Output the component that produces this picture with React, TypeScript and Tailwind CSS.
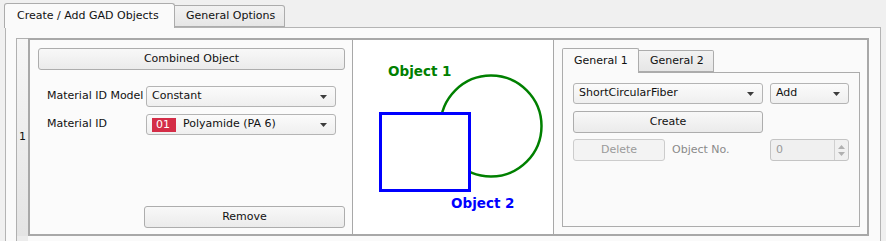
import React from "react";

const Arrow = ({ color = "#3c3c3c" }: { color?: string }) => (
  <svg width="7" height="4" viewBox="0 0 7 4" className="shrink-0">
    <path d="M0 0h7L3.5 4z" fill={color} />
  </svg>
);

const button =
  "h-[22px] border border-[#adadad] rounded-[3px] bg-linear-to-b from-[#f8f8f8] to-[#ebebeb] flex items-center justify-center text-[#111]";

const combo =
  "h-[21px] border border-[#b4b4b4] rounded-[3px] bg-linear-to-b from-[#fbfbfb] to-[#efefef] flex items-center justify-between pl-[5px] pr-[8px] text-[#111]";

const LeftPanel = () => (
  <div className="w-[323px] border-r border-[#a8a8a8] bg-[#fbfbfb] flex flex-col pl-[8px] pr-[7px] pt-[8px] pb-[6px]">
    <div className={`${button} w-full`}>Combined Object</div>
    <div className="mt-[16px] flex flex-col gap-[7px] pl-[9px]">
      <div className="flex items-center">
        <span className="w-[99px]">Material ID Model</span>
        <div className={`${combo} w-[190px]`}>
          <span>Constant</span>
          <Arrow />
        </div>
      </div>
      <div className="flex items-center">
        <span className="w-[99px]">Material ID</span>
        <div className={`${combo} w-[190px]`}>
          <span className="flex items-center">
            <span className="bg-[#d42d47] text-white h-[14px] w-[24px] pl-[4px] flex items-center leading-none">01</span>
            <span className="ml-[7px]">Polyamide (PA 6)</span>
          </span>
          <Arrow />
        </div>
      </div>
    </div>
    <div className={`${button} w-[201px] self-end mt-auto`}>Remove</div>
  </div>
);

const Drawing = () => (
  <div className="w-[201px] border-r border-[#a8a8a8] bg-white">
    <svg width="200" height="194" viewBox="0 0 200 194">
      <circle cx="138" cy="86" r="50.5" fill="none" stroke="#008000" strokeWidth="2.5" />
      <rect x="27.5" y="73.5" width="89" height="77" fill="white" stroke="#0000ff" strokeWidth="3" />
      <text x="35" y="36" fill="#008000" fontFamily="'DejaVu Sans', sans-serif" fontWeight="bold" fontSize="13.5">
        Object 1
      </text>
      <text x="98" y="168" fill="#0000ff" fontFamily="'DejaVu Sans', sans-serif" fontWeight="bold" fontSize="13.5">
        Object 2
      </text>
    </svg>
  </div>
);

const RightPanel = () => (
  <div className="flex-1 flex flex-col pl-[8px] pr-[7px] pt-[8px] pb-[7px]">
    <div className="flex items-end h-[24px]">
      <div className="relative z-10 -mb-px h-[25px] w-[77px] border border-b-0 border-[#acacac] rounded-t-[2px] bg-[#fafafa] flex items-center pl-[11px]">
        General 1
      </div>
      <div className="h-[22px] w-[75px] border border-l-0 border-[#acacac] rounded-tr-[2px] bg-linear-to-b from-[#f2f2f2] to-[#e6e6e6] flex items-center pl-[11px]">
        General 2
      </div>
    </div>
    <div className="flex-1 border border-[#acacac] bg-[#fafafa] pl-[10px] pt-[10px]">
      <div className="flex gap-[7px]">
        <div className={`${combo} w-[190px]`}>
          <span>ShortCircularFiber</span>
          <Arrow />
        </div>
        <div className={`${combo} w-[79px]`}>
          <span>Add</span>
          <Arrow />
        </div>
      </div>
      <div className={`${button} w-[190px] mt-[7px]`}>Create</div>
      <div className="flex items-center mt-[6px]">
        <div className="h-[22px] w-[92px] border border-[#cccccc] rounded-[3px] bg-[#f3f3f3] flex items-center justify-center text-[#9a9a9a]">
          Delete
        </div>
        <span className="w-[105px] pl-[7px] text-[#8a8a8a]">Object No.</span>
        <div className="h-[22px] w-[79px] border border-[#c4c4c4] rounded-[3px] bg-[#f0f0f0] flex items-stretch text-[#9a9a9a]">
          <span className="flex-1 flex items-center pl-[5px]">0</span>
          <div className="w-[14px] border-l border-[#d0d0d0] flex flex-col items-center justify-center gap-[3px]">
            <svg width="7" height="4" viewBox="0 0 7 4">
              <path d="M0 4h7L3.5 0z" fill="#b0b0b0" />
            </svg>
            <svg width="7" height="4" viewBox="0 0 7 4">
              <path d="M0 0h7L3.5 4z" fill="#b0b0b0" />
            </svg>
          </div>
        </div>
      </div>
    </div>
  </div>
);

export default function App() {
  return (
    <div
      className="w-[886px] h-[241px] overflow-hidden bg-[#f0f0f0] pt-[3px] pl-[4px] text-[11px] text-[#111]"
      style={{ fontFamily: "'DejaVu Sans', sans-serif" }}
    >
      <div className="flex items-end h-[24px]">
        <div className="relative z-10 -mb-px h-[25px] w-[171px] border border-b-0 border-[#acacac] rounded-t-[3px] bg-[#fafafa] flex items-center pl-[12px]">
          Create / Add GAD Objects
        </div>
        <div className="h-[22px] w-[110px] border border-l-0 border-[#acacac] rounded-tr-[3px] bg-linear-to-b from-[#f2f2f2] to-[#e6e6e6] flex items-center pl-[11px]">
          General Options
        </div>
      </div>
      <div className="ml-[1px] w-[876px] h-[230px] border border-[#b4b4b4] bg-[#fafafa] pl-[10px] pt-[10px]">
        <div className="w-[853px] border-l border-[#b0b0b0] flex flex-col">
          <div className="flex h-[198px]">
            <div className="w-[11px] border-t border-[#b0b0b0] bg-linear-to-b from-[#f6f6f6] to-[#e4e4e4] flex items-center justify-center">
              1
            </div>
            <div className="flex-1 border-2 border-[#a8a8a8] flex">
              <LeftPanel />
              <Drawing />
              <RightPanel />
            </div>
          </div>
          <div className="flex h-[12px]">
            <div className="w-[11px] bg-[#ececec]" />
          </div>
        </div>
      </div>
    </div>
  );
}
